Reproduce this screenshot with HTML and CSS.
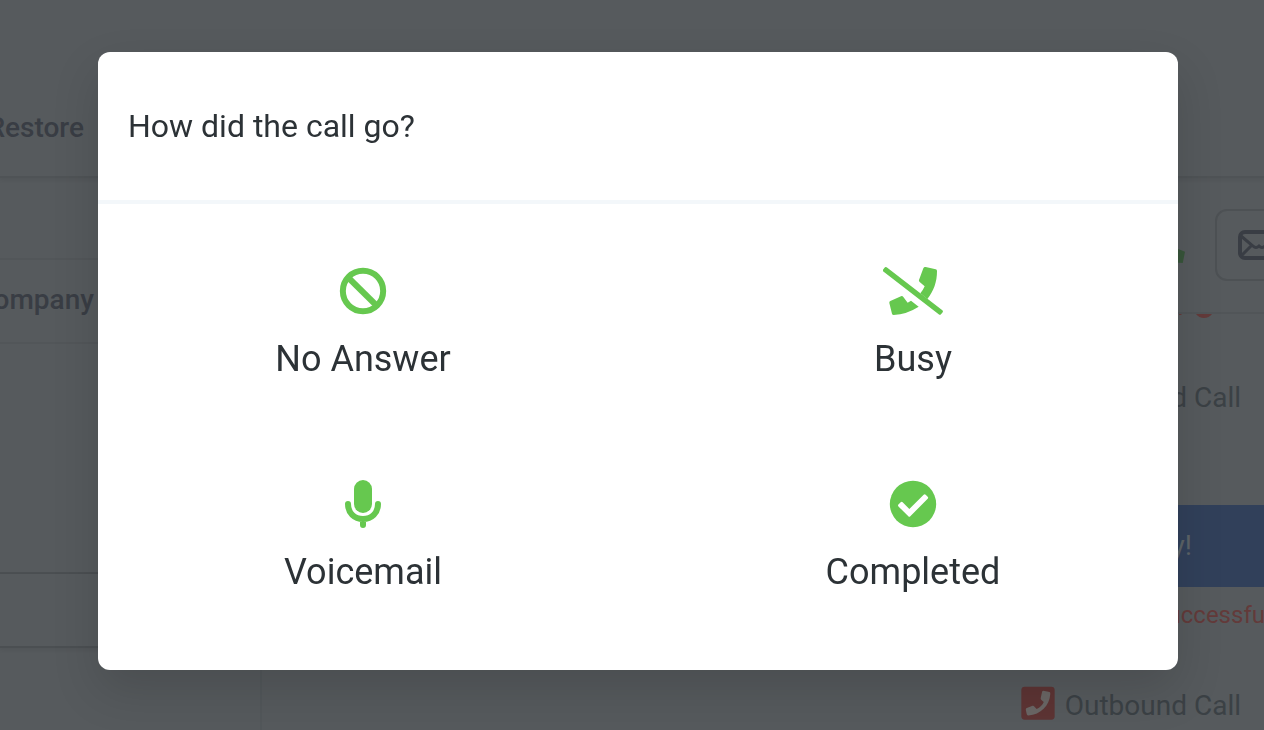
FILE: index.html
```
<!DOCTYPE html>
<html lang="en">
<head>
  <meta charset="UTF-8">
  <meta name="viewport" content="width=device-width, initial-scale=1.0">
  <title>How did the call go?</title>
  <link rel="stylesheet" href="styles.css">
</head>
<body>
  <div class="page" inert>
    <header class="topbar">
      <a class="topbar-link" href="#">Restore</a>
    </header>

    <div class="columns">
      <aside class="details">
        <div class="details-row toolbar-row"></div>
        <div class="details-row heading-row">Company</div>
        <div class="details-row content-row"></div>
        <div class="details-row footer-row"></div>
      </aside>

      <main class="activity">
        <div class="activity-toolbar">
          <svg class="call-icon" viewBox="0 0 32 32" aria-hidden="true">
            <path d="M3 5 L9 2 L14 10 L10 14 L18 22 L22 18 L32 22 L30 32 C14 32 3 20 3 5Z"/>
          </svg>
          <button class="mail-button" aria-label="Email">
            <svg width="42" height="30" viewBox="0 0 42 30" fill="none" stroke="currentColor" stroke-width="4">
              <rect x="2" y="2" width="38" height="26" rx="5"/>
              <path stroke-width="3" d="M3 6 L15 16 Q18 19 21 16 Q24 19 27 16 L39 6 M3 26 L13 16 M39 26 L29 16"/>
            </svg>
          </button>
        </div>
        <div class="activity-alert">
          <svg width="34" height="4" viewBox="0 0 34 4" fill="#633a3a" aria-hidden="true">
            <path d="M1 0 H4 L3 1 H1Z M18 0 H34 Q31 4 26 4 Q21 4 18 0Z"/>
          </svg>
        </div>
        <div class="activity-title">Outbound Call</div>
        <div class="activity-banner">Busy!</div>
        <div class="activity-status">Call successfully</div>
        <div class="activity-title last">
          <svg width="34" height="34" viewBox="0 0 100 100" aria-hidden="true">
            <rect x="1" y="2" width="98" height="97" rx="10" fill="#5d3434"/>
            <path fill="#6a6665" d="M66 14 L84 18 Q87 19 86 24 C84 58 58 83 22 87 Q18 87 17 83 L14 70 Q14 66 17 65 L34 58 Q37 57 39 60 L46 68 C56 63 63 56 67 47 L60 41 Q57 38 58 35 L62 17 Q63 14 66 14Z"/>
          </svg>
          Outbound Call
        </div>
      </main>
    </div>
  </div>

  <div class="overlay">
    <div class="modal" role="dialog" aria-modal="true" aria-labelledby="modalTitle">
      <div class="modal-header">
        <h2 id="modalTitle">How did the call go?</h2>
      </div>
      <div class="modal-body">
        <button class="option">
          <svg width="48" height="48" viewBox="57 51 144 144" fill="none" stroke="currentColor" stroke-width="18">
            <circle cx="129" cy="123" r="60.5"/>
            <path d="M86 84 L168 165"/>
          </svg>
          No Answer
        </button>
        <button class="option">
          <svg width="60" height="48" viewBox="39 51 180 144" fill="currentColor">
            <path d="M167 51 L197 58 Q201 59 201 63 C201 96 191 123 172 147 L151 130 Q159 121 164 109 L149 96 Q146 93 147 90 L160 55 Q162 50 167 51Z"/>
            <path d="M61 153 L93 139 Q97 137 100 141 L113 158 L123 152 L146 170 Q110 193 71 195 Q67 195 66 191 L58 159 Q57 155 61 153Z"/>
            <path d="M40 58 L45 52 Q48 50 52 53 L217 181 Q220 184 218 187 L213 193 Q210 196 206 193 L41 65 Q37 62 40 58Z"/>
          </svg>
          Busy
        </button>
        <button class="option">
          <svg width="48" height="48" viewBox="57 45 144 144" fill="none" stroke="currentColor" stroke-width="18" stroke-linecap="round">
            <rect x="102" y="45" width="54" height="99" rx="27" fill="currentColor" stroke="none"/>
            <path d="M84 117 C84 144 103 162 129 162 C155 162 174 144 174 117 M129 162 V180"/>
          </svg>
          Voicemail
        </button>
        <button class="option">
          <svg width="48" height="48" viewBox="57 45 144 144" fill="none">
            <circle cx="129" cy="117" r="69.5" fill="currentColor"/>
            <path fill="#fff" d="M86 118 L92 112 Q95 109 98 112 L118 132 L161 89 Q164 86 167 89 L173 95 Q176 98 173 101 L121 154 Q118 157 115 154 L86 125 Q82 121 86 118Z"/>
          </svg>
          Completed
        </button>
      </div>
    </div>
  </div>
</body>
</html>
```
FILE: styles.css
```
* {
  box-sizing: border-box;
}

body {
  margin: 0;
  height: 100vh;
  overflow: hidden;
  font-family: Roboto, "Liberation Sans", sans-serif;
  background-color: #565a5d;
  color: #393d44;
}

button {
  font-family: inherit;
  cursor: pointer;
}

/* Page behind the dialog */
.page {
  height: 100vh;
  display: flex;
  flex-direction: column;
  overflow: hidden;
}

.topbar {
  flex: none;
  height: 178px;
  padding-top: 78px;
  border-bottom: 2px solid #4f5356;
  box-shadow: 0 2px 4px rgba(0, 0, 0, 0.06);
}

.topbar-link {
  display: flex;
  justify-content: flex-end;
  width: 84px;
  font-size: 28px;
  line-height: 100px;
  font-weight: 500;
  color: inherit;
  text-decoration: none;
}

.columns {
  flex: 1;
  display: flex;
}

.details {
  flex: none;
  width: 262px;
  border-right: 2px solid #52575a;
}

.details-row {
  border-bottom: 2px solid #525659;
}

.toolbar-row {
  height: 82px;
}

.heading-row {
  display: flex;
  justify-content: flex-end;
  height: 84px;
  padding-right: 166px;
  font-size: 28px;
  line-height: 80px;
  font-weight: 500;
}

.content-row {
  height: 230px;
  border-color: #4b4f52;
}

.footer-row {
  height: 74px;
  border-color: #4b4f52;
  box-shadow: 0 2px 4px rgba(0, 0, 0, 0.06);
}

.activity {
  flex: 1;
  min-width: 0;
  color: #3b4145;
}

.activity-toolbar {
  display: flex;
  justify-content: flex-end;
  align-items: center;
  gap: 30px;
  height: 136px;
  border-bottom: 2px solid #515558;
}

.call-icon {
  width: 36px;
  height: 36px;
  fill: #38553a;
}

.mail-button {
  width: 88px;
  height: 72px;
  margin-right: -39px;
  padding: 0;
  border: 2px solid #4d5154;
  border-radius: 12px;
  background: none;
  color: #393d44;
}

.mail-button svg {
  display: block;
  margin: 0 auto;
}

.activity-alert {
  display: flex;
  justify-content: flex-end;
  height: 40px;
  padding-right: 52px;
}

.activity-title {
  display: flex;
  justify-content: flex-end;
  align-items: center;
  gap: 10px;
  height: 86px;
  padding-right: 23px;
  font-size: 28px;
}

.activity-title svg {
  margin-bottom: 4px;
}

.activity-banner {
  height: 82px;
  margin-top: 65px;
  padding-right: 72px;
  font-size: 28px;
  line-height: 82px;
  text-align: right;
  background-color: #31405a;
  color: #5c6367;
}

.activity-status {
  display: flex;
  justify-content: flex-end;
  margin-right: -24px;
  font-size: 24px;
  line-height: 56px;
  white-space: nowrap;
  color: #633a3a;
}

.activity-title.last {
  margin-top: 19px;
}

/* Dialog */
.overlay {
  position: fixed;
  inset: 0;
  padding: 52px 86px 60px 98px;
}

.modal {
  border-radius: 12px;
  background-color: #fff;
  color: #2c3236;
  box-shadow: 0 20px 48px rgba(0, 0, 0, 0.14);
}

.modal-header {
  padding: 54px 30px;
  border-bottom: 4px solid #f3f7fa;
}

.modal-header h2 {
  margin: 0;
  font-size: 32px;
  line-height: 40px;
  font-weight: 400;
}

.modal-body {
  display: grid;
  grid-template-columns: 1fr 1fr;
  gap: 100px 20px;
  padding: 63px 0 77px;
}

.option {
  display: flex;
  flex-direction: column;
  align-items: center;
  gap: 23px;
  padding: 0;
  border: none;
  background: none;
  font-size: 36px;
  line-height: 42px;
  color: inherit;
}

.option svg {
  color: #66c84f;
}
```
